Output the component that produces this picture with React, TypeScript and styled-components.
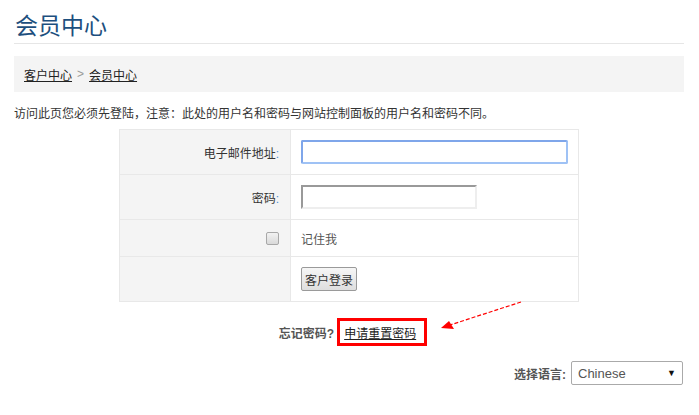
import React from "react";
import styled, { createGlobalStyle } from "styled-components";

const Global = createGlobalStyle`
  html, body { margin: 0; padding: 0; background: #fff; }
  body {
    font-family: "Liberation Sans", "Noto Sans CJK SC", sans-serif;
    font-size: 12px;
    color: #333;
  }
`;

const Page = styled.div`
  position: relative;
  width: 699px;
  height: 415px;
  padding: 0 15px 0 14px;
  box-sizing: border-box;
  overflow: hidden;
`;

const Title = styled.h1`
  margin: 0;
  padding-top: 9px;
  height: 34px;
  line-height: 34px;
  font-size: 23px;
  font-weight: normal;
  color: #1d4f7e;
  border-bottom: 1px solid #e6e6e6;
  padding-left: 1px;
`;

const Crumbs = styled.div`
  margin-top: 12px;
  height: 36px;
  background: #f4f4f4;
  display: flex;
  align-items: center;
  padding-left: 10px;
  gap: 5px;
`;

const CrumbLink = styled.a`
  color: #222;
  text-decoration: underline;
  font-size: 12px;
`;

const Sep = styled.span`
  color: #999;
`;

const Notice = styled.p`
  margin: 14px 0 0;
  line-height: 16px;
  color: #333;
`;

const FormTable = styled.table`
  margin: 7px auto 0;
  border-collapse: collapse;
  width: 460px;
  border: 1px solid #e8e8e8;
`;

const Row = styled.tr<{ $h: number }>`
  height: ${(p) => p.$h}px;
`;

const Label = styled.td`
  width: 159px;
  background: #f4f4f4;
  border: 1px solid #e8e8e8;
  text-align: right;
  padding: 0 11px 0 0;
  vertical-align: middle;
  color: #333;
`;

const Colon = styled.span`
  color: #4a8fd4;
`;

const Field = styled.td`
  border: 1px solid #e8e8e8;
  padding: 0 0 0 10px;
  vertical-align: middle;
  color: #555;
`;

const TextInput = styled.input<{ $w: number; $focus?: boolean }>`
  display: block;
  box-sizing: border-box;
  width: ${(p) => p.$w}px;
  height: 24px;
  margin: 0;
  padding: 0 3px;
  background: #fff;
  outline: none;
  border-style: solid;
  border-width: 2px;
  ${(p) =>
    p.$focus
      ? `border-color: #7fa6ea #9fc2f5 #9fc2f5 #7fa6ea; border-radius: 2px;`
      : `border-color: #999 #eee #eee #999;`}
`;

const Check = styled.span`
  display: inline-block;
  width: 11px;
  height: 11px;
  border: 1px solid #a8a8a8;
  border-radius: 2px;
  background: linear-gradient(#f2f2f2, #d9d9d9);
  vertical-align: middle;
`;

const Button = styled.button`
  display: block;
  box-sizing: border-box;
  width: 56px;
  height: 24px;
  margin: 0;
  padding: 0;
  border: 1px solid #9a9a9a;
  border-radius: 2px;
  background: linear-gradient(#f6f6f6, #dedede);
  font-family: "Liberation Sans", "Noto Sans CJK SC", sans-serif;
  font-size: 12px;
  color: #333;
`;

const Forgot = styled.div`
  margin-top: 16px;
  display: flex;
  justify-content: center;
  align-items: center;
  padding-left: 8px;
`;

const Bold = styled.span`
  font-weight: bold;
  color: #555;
  font-size: 12px;
`;

const Highlight = styled.span`
  display: inline-flex;
  align-items: center;
  height: 22px;
  padding: 0 8px 0 4px;
  border: 3px solid #ff0000;
  margin-left: 3px;
`;

const ResetLink = styled.a`
  color: #222;
  text-decoration: underline;
`;

const Lang = styled.div`
  margin-top: 15px;
  display: flex;
  justify-content: flex-end;
  align-items: center;
  gap: 5px;
  padding-right: 1px;
`;

const Select = styled.div`
  box-sizing: border-box;
  width: 112px;
  height: 24px;
  border: 1px solid #aaa;
  border-radius: 2px;
  display: flex;
  align-items: center;
  justify-content: space-between;
  padding: 0 6px 0 6px;
  color: #555;
  font-size: 13px;
`;

const Caret = styled.span`
  font-size: 9px;
  color: #111;
`;

const Annotation = styled.svg`
  position: absolute;
  left: 0;
  top: 0;
  pointer-events: none;
`;

export default function App() {
  return (
    <>
      <Global />
      <Page>
        <Title>会员中心</Title>
        <Crumbs>
          <CrumbLink>客户中心</CrumbLink>
          <Sep>&gt;</Sep>
          <CrumbLink>会员中心</CrumbLink>
        </Crumbs>
        <Notice>访问此页您必须先登陆，注意：此处的用户名和密码与网站控制面板的用户名和密码不同。</Notice>
        <FormTable>
          <tbody>
            <Row $h={45}>
              <Label>
                电子邮件地址<Colon>:</Colon>
              </Label>
              <Field>
                <TextInput $w={267} $focus />
              </Field>
            </Row>
            <Row $h={45}>
              <Label>
                密码<Colon>:</Colon>
              </Label>
              <Field>
                <TextInput $w={176} type="password" />
              </Field>
            </Row>
            <Row $h={37}>
              <Label>
                <Check />
              </Label>
              <Field>记住我</Field>
            </Row>
            <Row $h={45}>
              <Label />
              <Field>
                <Button>客户登录</Button>
              </Field>
            </Row>
          </tbody>
        </FormTable>
        <Forgot>
          <Bold>忘记密码?</Bold>
          <Highlight>
            <ResetLink>申请重置密码</ResetLink>
          </Highlight>
        </Forgot>
        <Lang>
          <Bold>选择语言:</Bold>
          <Select>
            <span>Chinese</span>
            <Caret>▼</Caret>
          </Select>
        </Lang>
        <Annotation width="699" height="415" viewBox="0 0 699 415">
          <line x1="521" y1="302" x2="450" y2="325" stroke="#ff0000" strokeWidth="1.2" strokeDasharray="4 2" />
          <polygon points="441,328 449,321 454,329" fill="#ff0000" />
        </Annotation>
      </Page>
    </>
  );
}
